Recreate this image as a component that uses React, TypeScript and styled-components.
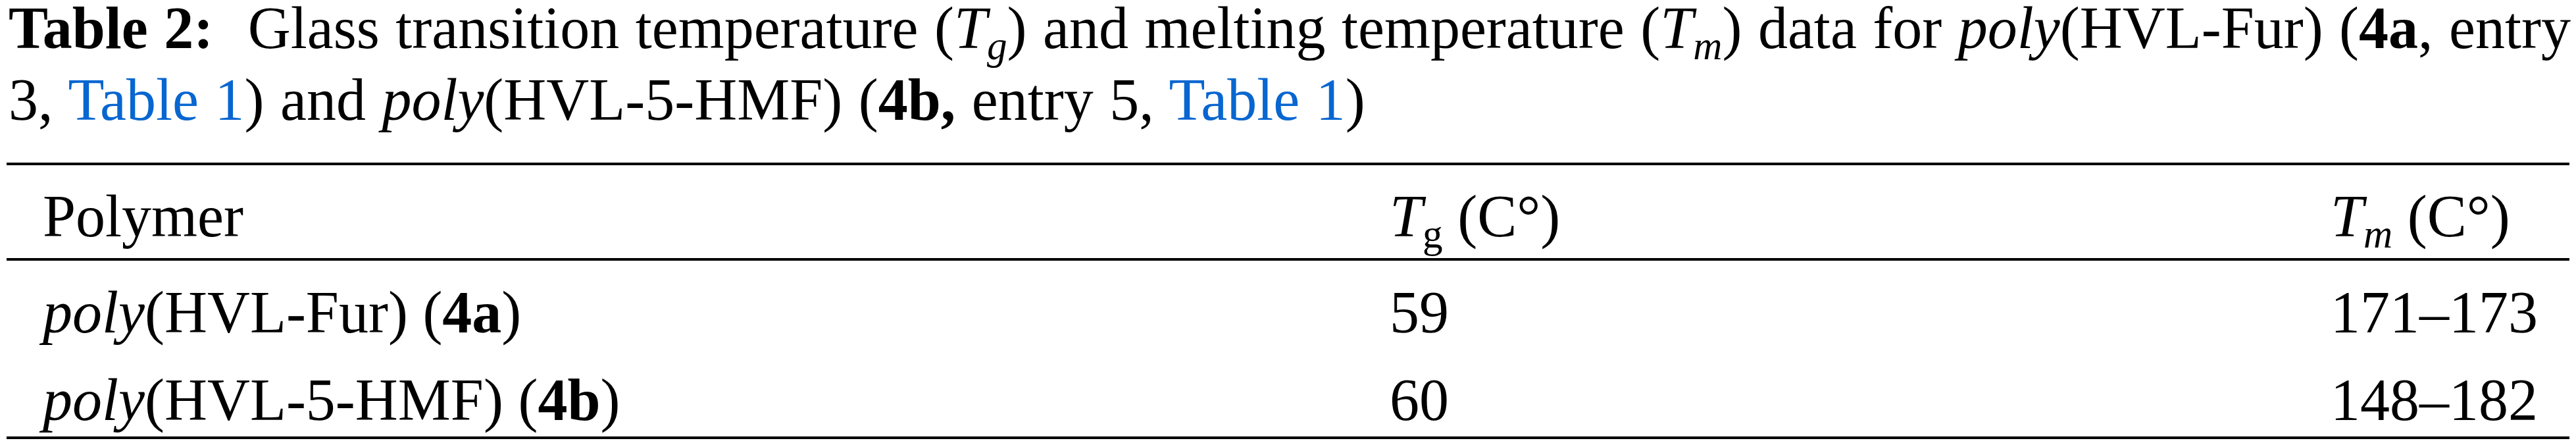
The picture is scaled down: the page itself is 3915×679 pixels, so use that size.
import styled, { createGlobalStyle } from "styled-components";

const GlobalStyle = createGlobalStyle`
    body {
        margin: 0;
        background: #fff;
    }
`

const Page = styled.div`
    width: 3915px;
    height: 679px;
    box-sizing: border-box;
    padding: 0 10px;
    font-family: "Liberation Serif", "Times New Roman", serif;
    font-size: 90px;
    line-height: 109px;
    color: #000;
    overflow: hidden;
`

const Caption = styled.p`
    margin: -12px -10px 0 0;
    padding-left: 3px;
    word-spacing: 2px;
`

const Label = styled.b`
    margin-right: 28px;
`

const Link = styled.span`
    color: #0866d0;
`

const Sub = styled.sub<{ $italic?: boolean }>`
    font-size: 0.68em;
    line-height: 0;
    font-style: ${p => (p.$italic ? "italic" : "normal")};
    vertical-align: -0.28em;
`

const Table = styled.div`
    margin-top: 41px;
    border-top: 4px solid #000;
    border-bottom: 4px solid #000;
    padding-bottom: 1px;
`

const Row = styled.div<{ $head?: boolean }>`
    display: grid;
    grid-template-columns: 2047px 1430px 1fr;
    padding: ${p => (p.$head ? "23px 0 9px" : "24px 0 0")};
    border-bottom: ${p => (p.$head ? "4px solid #000" : "none")};
`

const Cell = styled.div`
    padding-left: 55px;
    white-space: nowrap;
`

const rows = [
    { name: "HVL-Fur", id: "4a", tg: "59", tm: "171–173" },
    { name: "HVL-5-HMF", id: "4b", tg: "60", tm: "148–182" },
]

export default function App() {
    return (
        <Page>
            <GlobalStyle />
            <Caption>
                <Label>Table 2:</Label> Glass transition temperature (<i>T</i><Sub $italic>g</Sub>) and melting
                temperature (<i>T</i><Sub $italic>m</Sub>) data for <i>poly</i>(HVL-Fur) (<b>4a</b>, entry
                3, <Link>Table 1</Link>) and <i>poly</i>(HVL-5-HMF) (<b>4b,</b> entry 5, <Link>Table 1</Link>)
            </Caption>
            <Table>
                <Row $head>
                    <Cell>Polymer</Cell>
                    <Cell><i>T</i><Sub>g</Sub> (C°)</Cell>
                    <Cell><i>T</i><Sub $italic>m</Sub> (C°)</Cell>
                </Row>
                {rows.map(r => (
                    <Row key={r.id}>
                        <Cell><i>poly</i>({r.name}) (<b>{r.id}</b>)</Cell>
                        <Cell>{r.tg}</Cell>
                        <Cell>{r.tm}</Cell>
                    </Row>
                ))}
            </Table>
        </Page>
    );
}
